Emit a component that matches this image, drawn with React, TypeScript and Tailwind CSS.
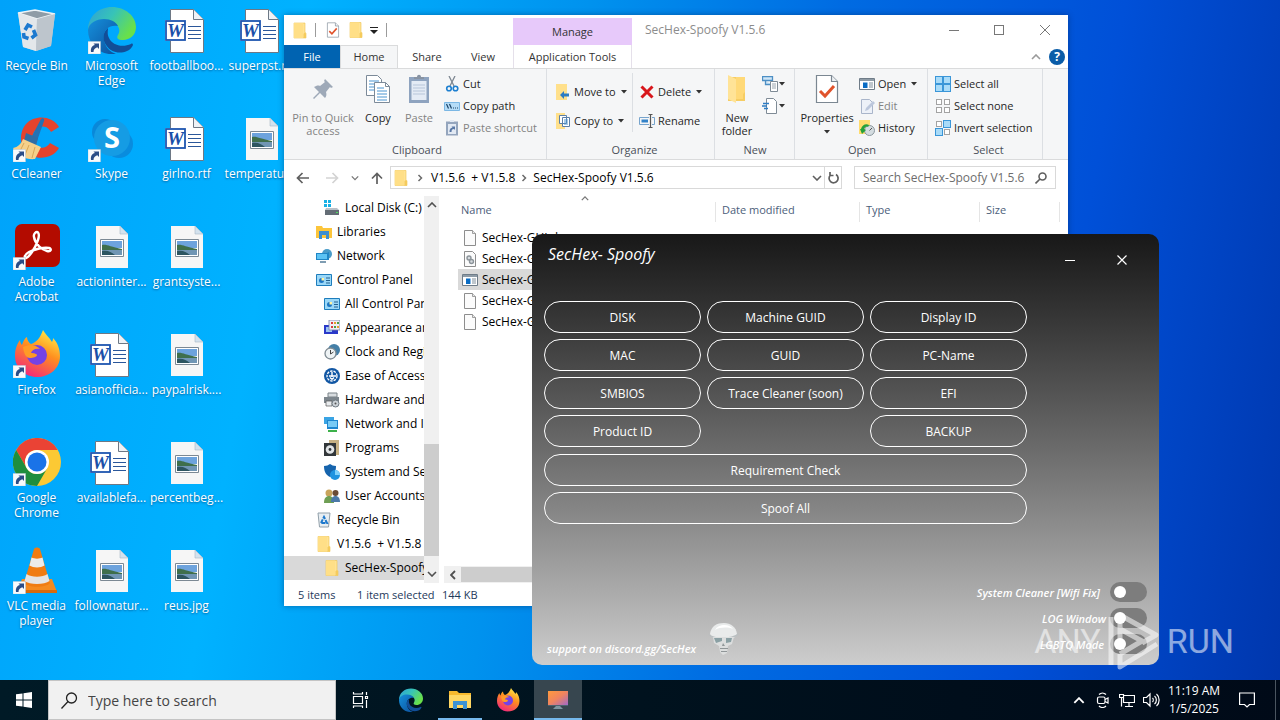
import React from "react";
import { clsx } from "clsx";

type IconProps = { className?: string };

/* ---------- Shared file icons ---------- */

const Folder = ({ className = "h-4 w-4" }: IconProps) => (
  <svg viewBox="0 0 16 16" className={className} aria-hidden="true">
    <path d="M2 .5h11v9l1 1.5v4.500H2z" fill="#ffe394" stroke="#efc24f" strokeWidth=".6" />
    <path d="M2 .5h9v15H2z" fill="#ffdf87" />
    <path d="M11.500 15.500v-4l1-1.500 1.500 1v4.500z" fill="#f5cb5c" />
  </svg>
);

const BlankPage = ({ className = "h-4 w-4" }: IconProps) => (
  <svg viewBox="0 0 16 16" className={className} aria-hidden="true">
    <path d="M2.500.5h8l3 3v12h-11z" fill="#fbfbfb" stroke="#8d8d8d" />
    <path d="M10.500.5v3h3" fill="#e8e8e8" stroke="#8d8d8d" strokeWidth=".8" />
  </svg>
);

const ConfigPage = ({ className = "h-4 w-4" }: IconProps) => (
  <svg viewBox="0 0 16 16" className={className} aria-hidden="true">
    <path d="M2.500.5h8l3 3v12h-11z" fill="#fbfbfb" stroke="#8d8d8d" />
    <circle cx="7" cy="7" r="2" fill="#d5dade" stroke="#8b9399" strokeWidth="1.400" />
    <circle cx="9.500" cy="10.500" r="2" fill="#d5dade" stroke="#8b9399" strokeWidth="1.400" />
  </svg>
);

const ProgramIcon = ({ className = "h-4 w-4" }: IconProps) => (
  <svg viewBox="0 0 16 16" className={className} aria-hidden="true">
    <path d="M.5 2.500h15v11H.5z" fill="#fff" stroke="#6f7c88" />
    <path d="M1 3h14v2H1z" fill="#8e9ba6" />
    <path d="M4 6.500h4.500v5.500H4z" fill="#0a6cc4" />
    <path d="M10 7h4M10 9h4M10 11h4" stroke="#7e8d9a" />
  </svg>
);

const CheckedPage = ({ className = "h-4 w-4" }: IconProps) => (
  <svg viewBox="0 0 24 30" className={className} aria-hidden="true">
    <path d="M1.500 1.500h15l6 6v21h-21z" fill="#fff" stroke="#7b8792" strokeWidth="1.200" />
    <path d="M16.500 1.500v6h6" fill="#eef1f4" stroke="#7b8792" strokeWidth="1.200" />
    <path d="m5 17 5 5 9-10" fill="none" stroke="#e0532c" strokeWidth="3" />
  </svg>
);

const Chevron = ({ className = "h-2 w-3", d = "m1 1 4 4 4-4" }: IconProps & { d?: string }) => (
  <svg viewBox="0 0 10 6" className={className} fill="none" stroke="currentColor" strokeWidth="1.600" aria-hidden="true">
    <path d={d} />
  </svg>
);

const ChevronRight = ({ className = "h-2 w-1.5" }: IconProps) => (
  <svg viewBox="0 0 6 8" className={className} fill="none" stroke="#6b6b6b" strokeWidth="1.500" aria-hidden="true">
    <path d="m1.500 1 3 3-3 3" />
  </svg>
);

const Caret = () => (
  <svg viewBox="0 0 6 4" className="h-1 w-1.5 shrink-0" aria-hidden="true">
    <path d="M0 0h6L3 3.500z" fill="#333" />
  </svg>
);

/* ---------- Desktop icons ---------- */

const Shortcut = () => (
  <g>
    <path d="M0 35.500h12.500V48H0z" fill="#f8fafc" stroke="#b9c9d6" strokeWidth=".5" />
    <path d="M3 46c-.5-4 1-6.500 4-7l-1.500-1.500H11V43l-1.700-1.700C7 42 5.500 43.500 5.500 46z" fill="#2b4d87" />
  </g>
);

const RecycleBin = () => (
  <>
    <path d="m5 7 17-3 20 4-4 32-15 5-13-4z" fill="#c9d0d6" opacity=".95" />
    <path d="m5 7 17-3 20 4-18 5z" fill="#8f9ca6" stroke="#eef3f6" strokeWidth="1.500" />
    <path d="m5 7 19 6-1 32-13-4z" fill="#e3e7ea" />
    <path d="m24 13 18-5-4 32-15 5z" fill="#bdc5cc" />
    <g fill="none" stroke="#1c79cf" strokeWidth="3.600">
      <path d="m12 24 3-5 4 2" />
      <path d="m20.500 24 2 5-4 3" />
      <path d="M15.500 32.500 11 31l-.5-4" />
    </g>
  </>
);

const EdgeShape = ({ id }: { id: string }) => (
  <>
    <defs>
      <linearGradient id={`${id}-top`} x1="0" y1="0" x2="1" y2=".5">
        <stop offset="0" stopColor="#2f9fd8" />
        <stop offset=".5" stopColor="#37c3b8" />
        <stop offset="1" stopColor="#69e04a" />
      </linearGradient>
      <linearGradient id={`${id}-left`} x1="0" y1="0" x2="1" y2="1">
        <stop offset="0" stopColor="#1590dc" />
        <stop offset="1" stopColor="#0c4f9c" />
      </linearGradient>
    </defs>
    <path d="M0 24C0 10 11 1 24 1s24 9 24 20c0 8-6 13-13 13-5 0-7-2-5-5 4-6-1-13-10-14C10 14 2 19 0 24z" fill={`url(#${id}-top)`} />
    <path d="M0 24c1-7 8-11 16-11 7 0 12 3 14 7-9-2-16 5-14 14 1 7 6 12 12 14C12 50 0 39 0 24z" fill={`url(#${id}-left)`} />
    <path d="M20 22c-5 4-6 11-2 17 5 8 14 9 21 6 3-1 5-4 6-6 0-1-1-2-2-1-9 4-19 1-22-6-2-4-1-7-1-10z" fill="#124e98" />
  </>
);

const CCleaner = () => (
  <>
    <path d="M46 13C40 2 22 0 13 10c-9 11-5 27 6 32 10 4 22 1 27-8l-9-5c-4 7-14 6-17-1-3-9 5-18 13-15 2 1 4 3 5 5z" fill="#e5432d" />
    <path d="M28 5c2-2 4 0 3 2L24 27l-6-3z" fill="#2472b4" />
    <path d="m13 19 12 5-2 8-12-5z" fill="#2f6ea6" />
    <path d="m10 25 18 8-6 12c-8 1-18-3-22-11 5-1 8-4 10-9z" fill="#f5d08a" />
    <path d="m11 29-4 8M16 31l-4 10M22 33l-3 11" stroke="#d8a655" strokeWidth="1" />
  </>
);

const Skype = () => (
  <>
    <circle cx="17" cy="18" r="13" fill="#0b7fcf" opacity=".8" />
    <circle cx="31" cy="30" r="14" fill="#0b84d6" opacity=".8" />
    <circle cx="24" cy="24" r="18" fill="#159ce4" />
    <text x="24" y="34" textAnchor="middle" fontFamily="Open Sans" fontWeight="700" fontSize="29" fill="#fff">
      S
    </text>
  </>
);

const Acrobat = () => (
  <>
    <rect x="2" y="2" width="45" height="43" rx="7" fill="#b30b00" />
    <path
      d="M22 11c3-3 5 1 3 7-3 9-9 17-12 18-2 0-2-3 3-6 6-3 15-5 20-4 3 1 2 4-2 3-5-1-12-7-13-14-.5-2 0-3 1-4z"
      fill="none"
      stroke="#fff"
      strokeWidth="2.400"
    />
  </>
);

const FirefoxShape = ({ id }: { id: string }) => (
  <>
    <defs>
      <linearGradient id={`${id}-fire`} x1=".8" y1="0" x2=".3" y2="1">
        <stop offset="0" stopColor="#fff04a" />
        <stop offset=".45" stopColor="#ff8f1f" />
        <stop offset="1" stopColor="#f2267c" />
      </linearGradient>
    </defs>
    <path
      d="M30 0c2 4 6 7 9 12 1-2 1-3 1-4 5 5 7 12 7 18 0 13-11 21-23 21S2 38 2 26c0-7 2-12 5-16 0 2 1 4 2 5 1-4 3-7 5-8 0 3 2 6 4 7 6-2 9-6 12-14z"
      fill={`url(#${id}-fire)`}
    />
    <circle cx="24" cy="25" r="10" fill="#7542e5" />
    <path d="M10 17c6-3 14-2 17 2-5-1-8 1-9 4 3 0 6 1 6 2 0 2-4 3-7 3-4 0-6-4-7-11z" fill="#ff9a26" />
  </>
);

const Chrome = () => (
  <>
    <circle cx="24" cy="24" r="24" fill="#fcc934" />
    <path d="M3.200 12A24 24 0 0 1 44.800 12H24a12 12 0 0 0-10.400 18z" fill="#ea4335" />
    <path d="M3.200 12A24 24 0 0 0 24 48l10.400-18a12 12 0 0 1-20.800 0z" fill="#1e8e3e" />
    <circle cx="24" cy="24" r="12" fill="#fff" />
    <circle cx="24" cy="24" r="9.500" fill="#1a73e8" />
  </>
);

const Vlc = () => (
  <>
    <path d="m9 33-5 13h40l-5-13z" fill="#f58a1f" />
    <path d="M4 44h40v3H4z" fill="#d66a0c" />
    <path d="M21 3c1-2 5-2 6 0l10 34c-4 5-22 5-26 0z" fill="#f07c12" />
    <path d="m18.500 11.500-2 8c4 2.500 11 2.500 15 0l-2-8c-3 1.500-8 1.500-11 0z" fill="#ecebe9" />
    <path d="m13.500 28-2 7c5 4 20 4 25 0l-2-7c-5 3.500-16 3.500-21 0z" fill="#e6e4e2" />
  </>
);

const WordDoc = () => (
  <>
    <path d="M7.500 3.500h23l10 10v33h-33z" fill="#fff" stroke="#6d7885" />
    <path d="M30.500 3.500v10h10" fill="#eef2f6" stroke="#6d7885" />
    <path d="M25 20.500h13M25 24.500h13M25 28.500h13M25 32.500h13" stroke="#2b579a" strokeWidth="1.200" />
    <rect x="2" y="14" width="21" height="21" fill="#fff" />
    <rect x="3" y="15" width="19" height="19" fill="#fff" stroke="#1f56b0" strokeWidth="1.800" />
    <text x="12.500" y="31" textAnchor="middle" fontFamily="Liberation Serif" fontStyle="italic" fontWeight="700" fontSize="19" fill="#1a4fa8">
      W
    </text>
  </>
);

const ImageDoc = () => (
  <>
    <path d="M8 4h24l8 8v34H8z" fill="#f6f6f6" />
    <path d="M32 4v8h8z" fill="#d3e2ee" stroke="#a9b9c6" strokeWidth=".6" />
    <path d="M12.500 17.500h23v17h-23z" fill="#fff" stroke="#7c8994" />
    <path d="M14 19h20v7H14z" fill="#6da3dd" />
    <path d="M14 23c5-1 8 2 20 4v2H14z" fill="#3f6f4c" />
    <path d="M14 28h20v5H14z" fill="#7196b4" />
    <path d="M14 29c6-1 9 1 13 4H14z" fill="#2d5560" />
  </>
);

const DESKTOP_ITEMS = [
  { label: "Recycle Bin", art: <RecycleBin /> },
  { label: "CCleaner", art: <CCleaner />, shortcut: true },
  { label: "Adobe Acrobat", art: <Acrobat />, shortcut: true },
  { label: "Firefox", art: <FirefoxShape id="desk-firefox" />, shortcut: true },
  { label: "Google Chrome", art: <Chrome />, shortcut: true },
  { label: "VLC media player", art: <Vlc />, shortcut: true },
  { label: "Microsoft Edge", art: <EdgeShape id="desk-edge" />, shortcut: true },
  { label: "Skype", art: <Skype />, shortcut: true },
  { label: "actioninter...", art: <ImageDoc /> },
  { label: "asianofficia...", art: <WordDoc /> },
  { label: "availablefa...", art: <WordDoc /> },
  { label: "follownatur...", art: <ImageDoc /> },
  { label: "footballboo...", art: <WordDoc /> },
  { label: "girlno.rtf", art: <WordDoc /> },
  { label: "grantsyste...", art: <ImageDoc /> },
  { label: "paypalrisk....", art: <ImageDoc /> },
  { label: "percentbeg...", art: <ImageDoc /> },
  { label: "reus.jpg", art: <ImageDoc /> },
  { label: "superpst.rtf", art: <WordDoc /> },
  { label: "temperatur...", art: <ImageDoc /> },
];

const DesktopIcons = () => (
  <div className="grid w-fit grid-flow-col auto-cols-[75px] grid-rows-[repeat(6,108px)]">
    {DESKTOP_ITEMS.map((item) => (
      <button key={item.label} className="flex flex-col items-center gap-1 pt-1.5 pr-0.5 text-[12px] leading-[15px] text-white">
        <svg viewBox="0 0 48 48" className="h-12 w-12 shrink-0" aria-hidden="true">
          {item.art}
          {item.shortcut && <Shortcut />}
        </svg>
        <span className="[text-shadow:0_1px_2px_rgba(0,50,100,0.6)]">{item.label}</span>
      </button>
    ))}
  </div>
);

/* ---------- Explorer ribbon ---------- */

const BigButton = ({ icon, label, muted, className, caret }: { icon: React.ReactNode; label: string; muted?: boolean; className: string; caret?: boolean }) => (
  <button className={clsx("flex flex-col items-center gap-1.5 leading-[13px]", className, muted ? "text-[#838383]" : "text-[#262626]")}>
    <span className="flex h-8 items-center justify-center">{icon}</span>
    <span>{label}</span>
    {caret && <Caret />}
  </button>
);

const SmallButton = ({ icon, label, muted, caret }: { icon: React.ReactNode; label: string; muted?: boolean; caret?: boolean }) => (
  <button className={clsx("flex h-[22px] items-center gap-[3px] whitespace-nowrap", muted ? "text-[#838383]" : "text-[#262626]")}>
    {icon}
    <span className={clsx(caret && "pr-0.5")}>{label}</span>
    {caret && <Caret />}
  </button>
);

const RibbonGroup = ({ title, className, children }: { title: string; className: string; children: React.ReactNode }) => (
  <section className={clsx("flex shrink-0 flex-col justify-between border-r border-[#dcdfe3]", className)}>
    <div className="flex pt-1">{children}</div>
    <h2 className="text-center leading-[18px] text-[#4a4f57]">{title}</h2>
  </section>
);

const PinIcon = () => (
  <svg viewBox="0 0 24 24" className="h-6 w-6" fill="#9ea9b8" aria-hidden="true">
    <path d="m14 2 8 8-2 1-1-1-4 5c1 3 0 5-1 6l-5-5-6 6-1-1 6-6-5-5c2-1 4-2 6-1l5-4-1-1z" />
  </svg>
);

const CopyIcon = () => (
  <svg viewBox="0 0 26 30" className="h-[30px] w-[26px]" aria-hidden="true">
    <path d="M1.500 1.500h11l4 4v16h-15z" fill="#fff" stroke="#7c8a99" />
    <path d="M4 7h10M4 10h10M4 13h10M4 16h10" stroke="#4b95d1" />
    <path d="M9.500 8.500h11l4 4v16h-15z" fill="#fff" stroke="#7c8a99" />
    <path d="M20.500 8.500v4h4" fill="none" stroke="#7c8a99" />
    <path d="M12 14h7M12 17h10M12 20h10M12 23h10M12 26h10" stroke="#4b95d1" />
  </svg>
);

const PasteIcon = () => (
  <svg viewBox="0 0 24 30" className="h-[30px] w-6" aria-hidden="true">
    <path d="M2 3h20v26H2z" fill="#8ea3bf" />
    <path d="M4.500 7h15v19h-15z" fill="#e4ebf5" />
    <path d="M7 5V3h3c0-3 4-3 4 0h3v2z" fill="#8793a3" />
    <path d="M6 11h12M6 14h12M6 17h12M6 20h12" stroke="#b7c5d9" />
  </svg>
);

const ScissorsIcon = () => (
  <svg viewBox="0 0 16 16" className="h-4 w-4" fill="none" aria-hidden="true">
    <path d="m5 0 5 10M11 0 6 10" stroke="#7d8791" strokeWidth="1.300" />
    <circle cx="5" cy="12.500" r="2.300" stroke="#1d7fd0" strokeWidth="1.600" />
    <circle cx="11.500" cy="12.500" r="2.300" stroke="#1d7fd0" strokeWidth="1.600" />
  </svg>
);

const CopyPathIcon = () => (
  <svg viewBox="0 0 16 16" className="h-4 w-4" aria-hidden="true">
    <path d="M.5 4.500h15v8H.5z" fill="#b5dcf7" stroke="#7bb7e4" />
    <path d="m2.500 6 2 4.500M5.500 6l2 4.500M9 10h1M11 10h1M13 10h1" stroke="#1c4468" strokeWidth="1.200" />
  </svg>
);

const PasteShortcutIcon = () => (
  <svg viewBox="0 0 16 16" className="h-4 w-4" aria-hidden="true">
    <path d="M2 1.500h12v14H2z" fill="#94a5bd" />
    <path d="M4 4h8v10H4zM6 0h4v2H6z" fill="#e2e9f3" />
    <path d="M5.500 12c0-3 1-4 3-4.500L7.500 6.500H11V10L10 9c-2 0-2.500 1-2.500 3z" fill="#5978a6" />
  </svg>
);

const MoveToIcon = () => (
  <svg viewBox="0 0 16 16" className="h-4 w-4" aria-hidden="true">
    <path d="M1 0h11v16H1z" fill="#ffe08b" />
    <path d="m5 11 4-4v2.500h5v3H9V15z" fill="#2d7cc4" />
  </svg>
);

const CopyToIcon = () => (
  <svg viewBox="0 0 16 16" className="h-4 w-4" aria-hidden="true">
    <path d="M1 0h9v16H1z" fill="#ffe08b" />
    <path d="M4.500 2.500h7v8h-7zM7.500 4.500h7v9h-7z" fill="#fff" stroke="#5a7fa8" />
    <path d="M9 7h4M9 9h4M9 11h4" stroke="#4b95d1" />
  </svg>
);

const DeleteIcon = () => (
  <svg viewBox="0 0 16 16" className="h-4 w-4" fill="none" stroke="#d8161b" strokeWidth="3" aria-hidden="true">
    <path d="m2.500 2.500 11 11M13.500 2.500l-11 11" />
  </svg>
);

const RenameIcon = () => (
  <svg viewBox="0 0 16 16" className="h-4 w-4" fill="none" aria-hidden="true">
    <path d="M10 4.500H.5v7H10M13 4.500h2.500v7H13" stroke="#77a4cd" />
    <path d="M2.500 6.500H9v3H2.500z" fill="#3382c8" />
    <path d="M9.500 1.500h4M9.500 14.500h4M11.500 1.500v13" stroke="#555" strokeWidth="1.200" />
  </svg>
);

const NewFolderIcon = () => (
  <svg viewBox="0 0 20 28" className="h-7 w-5" aria-hidden="true">
    <path d="M1 2h17v24H1z" fill="#f6cd63" />
    <path d="M1 0 9 4v24l-8-4z" fill="#ffe397" />
    <path d="M9 2h9v15l-2 2v5H9z" fill="#ffd978" />
  </svg>
);

const NewItemIcon = () => (
  <svg viewBox="0 0 16 16" className="h-4 w-4" fill="none" aria-hidden="true">
    <path d="M.5.500h10v4H.5zM3.500 4.500v4h6" stroke="#4d8fc4" strokeWidth="1.300" fill="#cfe6f7" />
    <path d="M8.500 5.500h7v10h-7z" fill="#fff" stroke="#7f8b96" />
    <path d="M10 8h4M10 10h4M10 12h4" stroke="#9aa5af" />
  </svg>
);

const EasyAccessIcon = () => (
  <svg viewBox="0 0 16 16" className="h-4 w-4" fill="none" aria-hidden="true">
    <path d="M4.500.500h7l3 3v12h-10z" fill="#fff" stroke="#7f8b96" />
    <path d="M1 5.500h6M0 8h5M2 10.500h4" stroke="#2d7cc4" strokeWidth="1.300" />
  </svg>
);

const EditIcon = () => (
  <svg viewBox="0 0 16 16" className="h-4 w-4" aria-hidden="true">
    <path d="M2.500 1.500h8l3 3v11h-11z" fill="#edf1f8" stroke="#a9b5ca" />
    <path d="m6 13 1-3 7-7 2 2-7 7z" fill="#bcc7dc" />
  </svg>
);

const HistoryIcon = () => (
  <svg viewBox="0 0 16 16" className="h-4 w-4" aria-hidden="true">
    <path d="M0 0h11v14H0z" fill="#ffdc6e" />
    <circle cx="10.500" cy="10.500" r="5" fill="#d4dce0" stroke="#8b979e" />
    <path d="M10.500 10.500 13 8" stroke="#555" />
    <path d="M2 9c1-4 5-6 8-4l-1 2c-2-1-3 0-4 2l2 1-4 4-2-5z" fill="#25a13a" />
  </svg>
);

const SelectIcon = ({ filled }: { filled: number[] }) => (
  <svg viewBox="0 0 16 16" className="h-4 w-4" aria-hidden="true">
    {[0, 1, 2, 3].map((i) => (
      <rect
        key={i}
        x={(i % 2) * 8 + (filled.includes(i) ? 0.5 : 1.5)}
        y={Math.floor(i / 2) * 8 + (filled.includes(i) ? 0.5 : 1.5)}
        width={filled.includes(i) ? 7 : 5}
        height={filled.includes(i) ? 7 : 5}
        fill={filled.includes(i) ? "#a9dbf8" : "#fff"}
        stroke={filled.includes(i) ? "#3a96d8" : "#a3a3a3"}
      />
    ))}
  </svg>
);

const Ribbon = () => (
  <div className="flex h-[92px] shrink-0 border-y border-[#dadbdc] bg-[#f5f6f7] text-[11px]">
    <RibbonGroup title="Clipboard" className="w-[263px] pl-1">
      <BigButton icon={<PinIcon />} label="Pin to Quick access" muted className="w-[70px]" />
      <BigButton icon={<CopyIcon />} label="Copy" className="w-10" />
      <BigButton icon={<PasteIcon />} label="Paste" muted className="w-[42px]" />
      <div className="flex flex-col pl-1">
        <SmallButton icon={<ScissorsIcon />} label="Cut" />
        <SmallButton icon={<CopyPathIcon />} label="Copy path" />
        <SmallButton icon={<PasteShortcutIcon />} label="Paste shortcut" muted />
      </div>
    </RibbonGroup>
    <RibbonGroup title="Organize" className="w-[168px] pl-2">
      <div className="flex w-[78px] flex-col gap-[7px] border-r border-[#dcdfe3] pt-2">
        <SmallButton icon={<MoveToIcon />} label="Move to" caret />
        <SmallButton icon={<CopyToIcon />} label="Copy to" caret />
      </div>
      <div className="flex flex-col gap-[7px] pt-2 pl-1.5">
        <SmallButton icon={<DeleteIcon />} label="Delete" caret />
        <SmallButton icon={<RenameIcon />} label="Rename" />
      </div>
    </RibbonGroup>
    <RibbonGroup title="New" className="w-20 pl-px">
      <BigButton icon={<NewFolderIcon />} label="New folder" className="w-[42px]" />
      <div className="flex flex-col pl-1">
        <button className="flex h-[22px] items-center gap-px" aria-label="New item">
          <NewItemIcon />
          <Caret />
        </button>
        <button className="flex h-[22px] items-center gap-px" aria-label="Easy access">
          <EasyAccessIcon />
          <Caret />
        </button>
      </div>
    </RibbonGroup>
    <RibbonGroup title="Open" className="w-[133px] pl-0.5">
      <BigButton icon={<CheckedPage className="h-[30px] w-6" />} label="Properties" className="w-[60px]" caret />
      <div className="flex flex-col pl-0.5">
        <SmallButton icon={<ProgramIcon />} label="Open" caret />
        <SmallButton icon={<EditIcon />} label="Edit" muted />
        <SmallButton icon={<HistoryIcon />} label="History" />
      </div>
    </RibbonGroup>
    <RibbonGroup title="Select" className="w-[115px] pl-[7px]">
      <div className="flex flex-col">
        <SmallButton icon={<SelectIcon filled={[0, 1, 2, 3]} />} label="Select all" />
        <SmallButton icon={<SelectIcon filled={[]} />} label="Select none" />
        <SmallButton icon={<SelectIcon filled={[1, 2]} />} label="Invert selection" />
      </div>
    </RibbonGroup>
  </div>
);

const TitleArea = () => (
  <div className="flex h-[53px] shrink-0">
    <div className="flex w-[229px] flex-col">
      <div className="flex h-[30px] items-center pl-2">
        <Folder className="h-[17px] w-4" />
        <span className="mr-2.5 ml-[7px] h-3.5 w-px bg-[#9b9b9b]" />
        <CheckedPage className="h-4 w-[14px]" />
        <Folder className="ml-2 h-4 w-4" />
        <svg viewBox="0 0 8 7" className="ml-1.5 h-[7px] w-2" aria-hidden="true">
          <path d="M0 0h8v1H0zM0 3h8L4 7z" fill="#222" />
        </svg>
        <span className="ml-2 h-3.5 w-px bg-[#9b9b9b]" />
      </div>
      <div className="flex flex-1 text-[11px] text-[#333]">
        <button className="w-14 bg-[#0063b1] text-white">File</button>
        <button className="w-[58px] border-x border-t border-[#dadbdc] bg-[#f5f6f7]">Home</button>
        <button className="w-[58px]">Share</button>
        <button className="w-[54px]">View</button>
      </div>
    </div>
    <div className="flex w-[119px] shrink-0 flex-col pt-[3px] text-[11px] text-[#333]">
      <div className="flex h-[27px] items-center justify-center bg-[#e7c9fa]">Manage</div>
      <button className="flex-1 border-x border-[#e5e0ea] whitespace-nowrap">Application Tools</button>
    </div>
    <div className="flex flex-1 flex-col">
      <div className="flex h-[30px] items-center pl-[13px]">
        <h1 className="flex-1 text-[#8c8c8c]">SecHex-Spoofy V1.5.6</h1>
        <button className="flex w-[45px] justify-center" aria-label="Minimize">
          <span className="h-px w-2.5 bg-[#777]" />
        </button>
        <button className="flex w-[45px] justify-center" aria-label="Maximize">
          <span className="h-2.5 w-2.5 border border-[#777]" />
        </button>
        <button className="flex w-[47px] justify-center" aria-label="Close">
          <svg viewBox="0 0 10 10" className="h-2.5 w-2.5" stroke="#777" aria-hidden="true">
            <path d="m0 0 10 10M10 0 0 10" />
          </svg>
        </button>
      </div>
      <div className="flex flex-1 items-center justify-end gap-2 pr-[3px] text-[#9a9a9a]">
        <button aria-label="Collapse ribbon">
          <Chevron className="h-1.5 w-2.5" d="m1 5 4-4 4 4" />
        </button>
        <button className="flex h-4 w-4 items-center justify-center rounded-full bg-[#0a5ca8] text-[12px] leading-4 font-bold text-white" aria-label="Help">
          ?
        </button>
      </div>
    </div>
  </div>
);

const Arrow = ({ className, d }: { className: string; d: string }) => (
  <svg viewBox="0 0 14 12" className={clsx("h-3 w-3.5", className)} fill="none" stroke="currentColor" strokeWidth="1.700" aria-hidden="true">
    <path d={d} />
  </svg>
);

const AddressBar = () => (
  <div className="flex h-[35px] shrink-0 items-center pr-3 pl-3">
    <button aria-label="Back">
      <Arrow className="text-[#5f5f5f]" d="M13 6H2M6.500 1 1.500 6l5 5" />
    </button>
    <button className="ml-[15px]" aria-label="Forward">
      <Arrow className="text-[#d3d3d3]" d="M1 6h11M7.500 1l5 5-5 5" />
    </button>
    <button className="ml-3 text-[#777]" aria-label="Recent locations">
      <Chevron className="h-1.5 w-2" />
    </button>
    <button className="mr-1.5 ml-[11px]" aria-label="Up">
      <Arrow className="text-[#5f5f5f]" d="M7 12V2M2 6.500l5-5 5 5" />
    </button>
    <div className="flex h-[23px] flex-1 items-center border border-[#d9d9d9]">
      <Folder className="ml-0.5 h-4 w-4" />
      <span className="ml-2">
        <ChevronRight />
      </span>
      <button className="ml-2 whitespace-pre">V1.5.6  + V1.5.8</button>
      <span className="ml-1.5">
        <ChevronRight />
      </span>
      <button className="ml-1.5 flex-1 text-left">SecHex-Spoofy V1.5.6</button>
      <button className="mr-0.5 text-[#5f5f5f]" aria-label="Previous locations">
        <Chevron className="h-1.5 w-2.5" />
      </button>
      <button className="flex h-full w-[17px] items-center justify-center border-l border-[#d9d9d9]" aria-label="Refresh">
        <svg viewBox="0 0 12 12" className="h-3 w-3" fill="none" stroke="#5f5f5f" strokeWidth="1.700" aria-hidden="true">
          <path d="M9 2.500A4.500 4.500 0 1 1 3.500 3M3 0v3.500h3.500" />
        </svg>
      </button>
    </div>
    <label className="ml-3 flex h-[23px] w-[202px] items-center border border-[#d9d9d9] pr-2 pl-2">
      <input className="w-full min-w-0 outline-none placeholder:text-[#6d6d6d]" placeholder="Search SecHex-Spoofy V1.5.6" aria-label="Search SecHex-Spoofy V1.5.6" />
      <svg viewBox="0 0 12 12" className="h-3 w-3 shrink-0" fill="none" stroke="#5f5f5f" strokeWidth="1.600" aria-hidden="true">
        <circle cx="7.500" cy="4.500" r="3.500" />
        <path d="M5 7 .5 11.500" />
      </svg>
    </label>
  </div>
);

/* ---------- Navigation pane ---------- */

const NAV_ART = {
  disk: (
    <>
      <path d="M1 10h14v5H1z" fill="#646d75" />
      <path d="m2 8-1 2h14l-2-2z" fill="#b9c1c8" />
      <path d="M12 12h2v1h-2z" fill="#4de05d" />
      <path d="M0 0h3v3H0zM4 0h3v3H4zM0 4h3v3H0zM4 4h3v3H4z" fill="#19b0e5" />
    </>
  ),
  library: (
    <>
      <path d="M0 2h6l1 2h9v10H0z" fill="#fcc53b" />
      <path d="M3 7h10v8h-3v-4H6v4H3z" fill="#3d8ed0" />
    </>
  ),
  network: (
    <>
      <circle cx="11" cy="6" r="5" fill="#4a9cc9" />
      <path d="M0 5h11l2-1v8H0z" fill="#1f86c6" />
      <path d="M1 6h10v5H1z" fill="#5cc3f4" />
      <path d="M4 13h6v2H4z" fill="#7f9db2" />
    </>
  ),
  panel: (
    <>
      <path d="M.5 2.500h15v11H.5z" fill="#9ad8f8" stroke="#1e7dbc" />
      <circle cx="5.500" cy="8.500" r="2.500" fill="#1d76c4" />
      <path d="M5.500 8.500V6H8v2.500z" fill="#fff3a0" />
      <path d="M10 6h4M10 8.500h4M10 11h4" stroke="#24618f" />
    </>
  ),
  appearance: (
    <>
      <path d="M0 5h14v9H0z" fill="#2a39c9" />
      <path d="M2 7h6v5H2z" fill="#9bc3f4" />
      <path d="M5 0h11v10H5z" fill="#efeff5" stroke="#7880a8" strokeWidth=".8" />
      <path d="M7 2h2v2H7zM7 6h2v2H7z" fill="#d84040" />
      <path d="M10 2h2v2h-2zM13 6h2v2h-2z" fill="#e59f2a" />
      <path d="M13 2h2v2h-2zM10 6h2v2h-2z" fill="#4a9e47" />
    </>
  ),
  clock: (
    <>
      <circle cx="10" cy="6" r="6" fill="#447fa7" />
      <circle cx="6.500" cy="9.500" r="5.500" fill="#eef3f5" stroke="#7f8b93" strokeWidth="1.300" />
      <path d="M6.500 6v4l3-2" fill="none" stroke="#444" />
    </>
  ),
  ease: (
    <>
      <circle cx="8" cy="8" r="8" fill="#1257a4" />
      <circle cx="8" cy="8" r="5" fill="none" stroke="#fff" strokeWidth="1.300" strokeDasharray="2.500 1" />
      <path d="M8 4v5M5 8h7M8 11.500 6 9.500M8 11.500l2-2" stroke="#fff" strokeWidth="1.400" />
    </>
  ),
  hardware: (
    <>
      <path d="M4 1h9v4H4z" fill="#d9dde0" stroke="#7b8388" />
      <path d="M0 5h15v6H0z" fill="#7d868d" />
      <path d="M2 9h6v5H2z" fill="#e9ecee" stroke="#555" strokeWidth=".7" />
      <circle cx="11.500" cy="11.500" r="3.500" fill="#cdd3d8" stroke="#707a82" />
      <circle cx="11.500" cy="11.500" r="1" fill="#555" />
    </>
  ),
  internet: (
    <>
      <path d="M0 1h10v7H0z" fill="#3aa4e4" />
      <path d="M3 4h11v9H3z" fill="#1e86cf" />
      <path d="M4 5h9v6H4z" fill="#79cbf5" />
      <path d="M4 14h9v2H4z" fill="#3cb14a" />
    </>
  ),
  programs: (
    <>
      <path d="M5 0h10v15H5z" fill="#c7b184" />
      <path d="M0 3h12v13H0z" fill="#32373a" />
      <circle cx="6" cy="9.500" r="4.300" fill="#e2e5e7" />
      <circle cx="6" cy="9.500" r="1.400" fill="#32373a" />
    </>
  ),
  security: (
    <>
      <path d="M0 2c3 0 4-1 6-2 2 1 3 2 6 2 0 6-2 9-6 11C2 11 0 8 0 2z" fill="#1664ad" />
      <circle cx="11" cy="11" r="5" fill="#1f93e0" />
      <path d="M11 11V6a5 5 0 0 1 5 5z" fill="#7fd0fa" />
    </>
  ),
  users: (
    <>
      <circle cx="5" cy="5" r="3.500" fill="#c8a45c" />
      <path d="M0 15c0-5 2-7 5-7s5 2 5 7z" fill="#6f9f54" />
      <circle cx="11.500" cy="5" r="3" fill="#6a4b35" />
      <path d="M7 14c0-4 2-6 4.500-6S16 10 16 14z" fill="#4a79a8" />
    </>
  ),
  bin: (
    <>
      <path d="m2 1 1.500 14h9L14 1z" fill="#e8eef2" stroke="#92a0aa" />
      <path d="m5 11 3-6 3 6z" fill="none" stroke="#1d78cc" strokeWidth="2" strokeDasharray="4 1" />
    </>
  ),
};

const NAV_ITEMS: { label: string; art?: keyof typeof NAV_ART; deep?: boolean; selected?: boolean }[] = [
  { label: "Local Disk (C:)", art: "disk", deep: true },
  { label: "Libraries", art: "library" },
  { label: "Network", art: "network" },
  { label: "Control Panel", art: "panel" },
  { label: "All Control Panel Items", art: "panel", deep: true },
  { label: "Appearance and Personalization", art: "appearance", deep: true },
  { label: "Clock and Region", art: "clock", deep: true },
  { label: "Ease of Access", art: "ease", deep: true },
  { label: "Hardware and Sound", art: "hardware", deep: true },
  { label: "Network and Internet", art: "internet", deep: true },
  { label: "Programs", art: "programs", deep: true },
  { label: "System and Security", art: "security", deep: true },
  { label: "User Accounts", art: "users", deep: true },
  { label: "Recycle Bin", art: "bin" },
  { label: "V1.5.6  + V1.5.8" },
  { label: "SecHex-Spoofy V1.5.6", deep: true, selected: true },
];

const NavPane = () => (
  <nav className="flex w-[155px] shrink-0">
    <ul className="w-[140px] overflow-hidden">
      {NAV_ITEMS.map((item) => (
        <li key={item.label}>
          <button
            className={clsx(
              "flex h-6 w-full items-center gap-[5px] overflow-hidden whitespace-pre",
              item.deep ? "pl-10" : "pl-8",
              item.selected && "bg-[#d9d9d9]"
            )}
          >
            {item.art ? (
              <svg viewBox="0 0 16 16" className="h-4 w-4 shrink-0" aria-hidden="true">
                {NAV_ART[item.art]}
              </svg>
            ) : (
              <Folder className="h-4 w-4 shrink-0" />
            )}
            {item.label}
          </button>
        </li>
      ))}
    </ul>
    <div className="flex w-[15px] flex-col items-center bg-[#f0f0f0] text-[#505050]">
      <button className="flex h-[18px] items-center" aria-label="Scroll up">
        <Chevron className="h-1.5 w-2.5" d="m1 5 4-4 4 4" />
      </button>
      <div className="mt-auto h-28 w-full bg-[#cdcdcd]" />
      <button className="flex h-[27px] items-end pb-1.5" aria-label="Scroll down">
        <Chevron className="h-1.5 w-2.5" />
      </button>
    </div>
  </nav>
);

/* ---------- File list ---------- */

const FILES = [
  { name: "SecHex-GUI.deps", date: "9/16/2024 2:26 PM", type: "JSON File", size: "58 KB", icon: <BlankPage className="h-4 w-4 shrink-0" /> },
  { name: "SecHex-GUI.dll", icon: <ConfigPage className="h-4 w-4 shrink-0" /> },
  { name: "SecHex-GUI", icon: <ProgramIcon className="h-4 w-4 shrink-0" />, selected: true },
  { name: "SecHex-GUI.pdb", icon: <BlankPage className="h-4 w-4 shrink-0" /> },
  { name: "SecHex-GUI", icon: <BlankPage className="h-4 w-4 shrink-0" /> },
];

const COLUMNS = [
  { label: "Name", width: "w-[258px]", pad: "pl-[3px]" },
  { label: "Date modified", width: "w-[144px]", pad: "pl-1.5" },
  { label: "Type", width: "w-[120px]", pad: "pl-1.5" },
  { label: "Size", width: "w-20", pad: "pl-1.5" },
];

const FileList = () => (
  <div className="ml-[5px] flex min-w-0 flex-1 flex-col">
    <div className="flex h-1.5 pl-[137px] text-[#777]">
      <Chevron className="h-[5px] w-2" d="m1 5 4-4 4 4" />
    </div>
    <table className="ml-3.5 w-[602px] table-fixed border-collapse">
      <thead>
        <tr>
          {COLUMNS.map((col) => (
            <th key={col.label} className={clsx("p-0 pb-[5px] text-left text-[11px] font-normal text-[#4c607a]", col.width)}>
              <div className={clsx("h-5 border-r border-[#e5e5e5] leading-4", col.pad)}>{col.label}</div>
            </th>
          ))}
        </tr>
      </thead>
      <tbody>
        {FILES.map((file, index) => (
          <tr key={index} className={clsx("h-[21px]", file.selected && "bg-[#d9d9d9]")}>
            <td className="p-0 pl-1">
              <span className="flex items-center gap-1">
                {file.icon}
                {file.name}
              </span>
            </td>
            <td className="p-0 pl-1.5 text-[11px] whitespace-nowrap text-[#6d6d6d]">{file.date}</td>
            <td className="p-0 pl-1.5 text-[11px] whitespace-nowrap text-[#6d6d6d]">{file.type}</td>
            <td className="p-0 pr-2 text-right text-[11px] text-[#6d6d6d]">{file.size}</td>
          </tr>
        ))}
      </tbody>
    </table>
    <div className="mt-auto flex h-[17px] items-center bg-[#f0f0f0]">
      <button className="flex w-[17px] justify-center text-[#505050]" aria-label="Scroll left">
        <svg viewBox="0 0 6 10" className="h-2.5 w-1.5" fill="none" stroke="currentColor" strokeWidth="1.800" aria-hidden="true">
          <path d="M5 1 1 5l4 4" />
        </svg>
      </button>
      <div className="h-[15px] w-[520px] bg-[#cdcdcd]" />
    </div>
  </div>
);

const ExplorerWindow = () => (
  <section className="absolute top-[15px] left-[284px] flex h-[591px] w-[784px] flex-col bg-white text-[12px] leading-4 text-black shadow-[0_0_6px_rgba(0,30,80,0.45)]">
    <TitleArea />
    <Ribbon />
    <AddressBar />
    <div className="flex min-h-0 flex-1 pt-px">
      <NavPane />
      <FileList />
    </div>
    <footer className="flex h-[23px] shrink-0 items-center pl-3.5 text-[11px] text-[#1e395b]">
      <span className="w-[59px]">5 items</span>
      <span className="w-[85px] whitespace-nowrap">1 item selected</span>
      <span>144 KB</span>
    </footer>
  </section>
);

/* ---------- Spoofy window ---------- */

const ACTIONS = [
  { label: "DISK" },
  { label: "Machine GUID" },
  { label: "Display ID" },
  { label: "MAC" },
  { label: "GUID" },
  { label: "PC-Name" },
  { label: "SMBIOS" },
  { label: "Trace Cleaner (soon)" },
  { label: "EFI" },
  { label: "Product ID" },
  { label: "BACKUP", span: "col-start-3" },
  { label: "Requirement Check", span: "col-span-3 mt-px" },
  { label: "Spoof All", span: "col-span-3" },
];

const SWITCHES = [
  { id: "cleaner", label: "System Cleaner [Wifi Fix]", gap: "gap-2.5" },
  { id: "log", label: "LOG Window", gap: "gap-1" },
  { id: "mode", label: "LGBTQ Mode", gap: "gap-1.5" },
];

const Skull = () => (
  <svg viewBox="0 0 32 36" className="h-9 w-8" aria-hidden="true">
    <path d="M2 13C3 5 9 2 16 2s12 4 13 11l-3 4H5z" fill="#e9ebeb" />
    <path d="M7 9c3-6 14-7 18-1-5-2-13-2-18 1z" fill="#fff" />
    <path d="M0 13c8 5 23 5 31-1l-2 3c-7 4-20 4-26 1z" fill="#b9bfc1" />
    <path d="M5 16h21l-2 7-4 2-1 7-4 2-3-3-1-6-5-3z" fill="#dcdede" />
    <path d="M6 17h8v3l-6 2zM18 17h6l-1 4-5 1z" fill="#8aa0a4" />
    <path d="m15 22 2 3h-3zM12 27h8v1h-8zM13 30h6v1h-6z" fill="#909698" />
  </svg>
);

const SpoofyWindow = () => (
  <section className="absolute top-[234px] left-[532px] flex h-[431px] w-[627px] flex-col rounded-[10px] bg-linear-to-b from-[#181818] to-[#cdcdcd] px-3 text-white">
    <header className="flex h-[67px] shrink-0 items-start pt-2.5 pl-1">
      <h2 className="flex-1 text-[16px] leading-5 font-medium italic">SecHex- Spoofy</h2>
      <div className="flex items-center pt-1.5">
        <button className="flex h-5 w-[54px] items-center justify-center" aria-label="Minimize window">
          <span className="h-px w-2.5 bg-white" />
        </button>
        <button className="flex h-5 w-[50px] items-center justify-center" aria-label="Close window">
          <svg viewBox="0 0 10 10" className="h-2.5 w-2.5" stroke="#fff" strokeWidth="1.200" aria-hidden="true">
            <path d="m.5.500 9 9M9.500.500l-9 9" />
          </svg>
        </button>
      </div>
    </header>
    <div className="grid grid-cols-[repeat(3,157px)] gap-1.5">
      {ACTIONS.map((action) => (
        <button key={action.label} className={clsx("h-8 rounded-2xl border border-white pt-0.5 text-[12px]", action.span)}>
          {action.label}
        </button>
      ))}
    </div>
    <footer className="mt-auto flex items-end pb-2 pl-[3px] text-[11px] leading-4 font-semibold italic">
      <a href="#support" className="w-[161px]">
        support on discord.gg/SecHex
      </a>
      <Skull />
      <div className="ml-auto flex flex-col items-end gap-1.5 pb-[3px]">
        {SWITCHES.map((item) => (
          <div key={item.id} className={clsx("flex items-center", item.gap)}>
            <label htmlFor={item.id} className="pt-0.5">
              {item.label}
            </label>
            <input
              id={item.id}
              type="checkbox"
              className="h-5 w-[37px] appearance-none rounded-full bg-[#7d7d7d] pt-1 pl-1 before:block before:h-3 before:w-3 before:rounded-full before:bg-white"
            />
          </div>
        ))}
      </div>
    </footer>
  </section>
);

/* ---------- Watermark ---------- */

const Watermark = () => (
  <div className="pointer-events-none absolute right-[46px] bottom-[48px] flex items-center gap-1.5 font-['Roboto',sans-serif] text-[34px] leading-none text-white opacity-55">
    <span>ANY</span>
    <svg viewBox="0 0 54 62" className="h-[62px] w-[54px]" fill="none" stroke="#fff" strokeWidth="5" aria-hidden="true">
      <path d="M4 7v48" />
      <path d="M13 32V5l36 20-14 8" strokeLinejoin="round" />
      <path d="m13 44 0 13 37-23M13 44l22-13-22-12" strokeLinejoin="round" />
    </svg>
    <span>RUN</span>
  </div>
);

/* ---------- Taskbar ---------- */

const TaskbarFolder = () => (
  <svg viewBox="0 0 24 24" className="h-6 w-6" aria-hidden="true">
    <path d="M1 3h8l2 2h12v15H1z" fill="#f7b92d" />
    <path d="M1 7h22v13H1z" fill="#ffd763" />
    <path d="M5 13h14v8h-4v-4H9v4H5z" fill="#3b92d4" />
  </svg>
);

const TaskbarMonitor = () => (
  <svg viewBox="0 0 24 24" className="h-6 w-6" aria-hidden="true">
    <defs>
      <linearGradient id="monitor" x1="0" y1="0" x2="1" y2="1">
        <stop offset="0" stopColor="#ff9a3d" />
        <stop offset=".5" stopColor="#f0845f" />
        <stop offset="1" stopColor="#a06ac8" />
      </linearGradient>
    </defs>
    <path d="M2 3h20v14H2z" fill="url(#monitor)" />
    <path d="M2 17h20v1H2z" fill="#4c6470" />
    <path d="M10 18h4l3 3H7z" fill="#7e95a0" />
  </svg>
);

const Taskbar = () => (
  <footer className="flex h-10 shrink-0 items-center bg-linear-to-r from-[#001a26] via-[#00121e] to-[#000a18] text-white">
    <button className="flex h-full w-12 items-center justify-center" aria-label="Start">
      <svg viewBox="0 0 16 16" className="h-4 w-4" fill="#fff" aria-hidden="true">
        <path d="M0 2.300 6.500 1.400v6.100H0zM7.500 1.200 16 0v7.500H7.500zM0 8.500h6.500v6.100L0 13.700zM7.500 8.500H16V16l-8.500-1.200z" />
      </svg>
    </button>
    <label className="flex h-full w-72 items-center gap-2.5 border border-[#c4c4c4] bg-[#f1f1f1] pl-3 text-[#333]">
      <svg viewBox="0 0 17 17" className="h-[17px] w-[17px] shrink-0" fill="none" stroke="#222" strokeWidth="1.300" aria-hidden="true">
        <circle cx="10.500" cy="6" r="5" />
        <path d="M7 9.500.5 16.500" />
      </svg>
      <input className="w-full min-w-0 text-[14px] outline-none placeholder:text-[#444]" placeholder="Type here to search" aria-label="Type here to search" />
    </label>
    <button className="flex h-full w-12 items-center justify-center" aria-label="Task View">
      <svg viewBox="0 0 18 18" className="h-[18px] w-[18px]" fill="none" stroke="#fff" strokeWidth="1.200" aria-hidden="true">
        <path d="M2.500 5.500h9v7h-9zM2.500 1v2h9V1M2.500 17v-2h9v2M15.500 1v3M15.500 9v8M14.500 5.500h2v2h-2z" />
      </svg>
    </button>
    <button className="flex h-full w-[54px] items-center justify-center" aria-label="Microsoft Edge">
      <svg viewBox="0 0 48 48" className="h-6 w-6" aria-hidden="true">
        <EdgeShape id="bar-edge" />
      </svg>
    </button>
    <button className="flex h-full w-[44px] items-center justify-center border-b-2 border-[#76b9ed] pt-0.5" aria-label="File Explorer">
      <TaskbarFolder />
    </button>
    <button className="flex h-full w-[52px] items-center justify-center" aria-label="Firefox">
      <svg viewBox="0 0 48 48" className="h-6 w-6" aria-hidden="true">
        <FirefoxShape id="bar-firefox" />
      </svg>
    </button>
    <button className="flex h-full w-12 items-center justify-center border-b-2 border-[#76b9ed] bg-[#37464f] pt-0.5" aria-label="SecHex-Spoofy">
      <TaskbarMonitor />
    </button>
    <div className="ml-auto flex h-full items-center">
      <button className="flex w-6 justify-center" aria-label="Show hidden icons">
        <Chevron className="h-[7px] w-3" d="m1 5 4-4 4 4" />
      </button>
      <button className="flex w-6 justify-center" aria-label="Meet now">
        <svg viewBox="0 0 16 16" className="h-4 w-4" fill="none" stroke="#fff" strokeWidth="1.200" aria-hidden="true">
          <rect x="2.500" y="5" width="7.500" height="6.500" rx="1.500" />
          <path d="m10 7.500 3-1.500v5l-3-1.500M4 2.500C6 .5 9 .5 11 2.500M4 14c2 2 5 2 7 0" />
        </svg>
      </button>
      <button className="flex w-6 justify-center" aria-label="Network status">
        <svg viewBox="0 0 16 16" className="h-4 w-4" fill="none" stroke="#fff" strokeWidth="1.200" aria-hidden="true">
          <path d="M5 3.500h10.500v7H4.500V6M10 10.500v3.500M6 14.500h8M.5 2.500h4v3h-4zM2.500 5.500v9" />
        </svg>
      </button>
      <button className="flex w-6 justify-center" aria-label="Volume">
        <svg viewBox="0 0 17 16" className="h-4 w-[17px]" fill="none" stroke="#fff" strokeWidth="1.200" aria-hidden="true">
          <path d="M.5 5.500h3L7 2v12l-3.500-3.500h-3zM9.500 6c1 1 1 3 0 4M11.500 4c2.500 2 2.500 6 0 8M13.500 2c3.500 3 3.500 9 0 12" />
        </svg>
      </button>
      <button className="w-[62px] text-center text-[12px] leading-[18px] whitespace-nowrap">
        <time>
          11:19 AM
          <br />
          1/5/2025
        </time>
      </button>
      <button className="flex w-11 justify-center" aria-label="Notifications">
        <svg viewBox="0 0 16 16" className="h-4 w-4" fill="none" stroke="#fff" strokeWidth="1.200" aria-hidden="true">
          <path d="M.6 1h14.800v11.500H10.500L8 15l-2.500-2.500H.6z" />
        </svg>
      </button>
      <span className="mr-1 ml-1.5 h-full w-px bg-[#4a5560]" />
    </div>
  </footer>
);

export default function App() {
  return (
    <div className="relative flex h-screen flex-col overflow-hidden bg-[linear-gradient(100deg,#00a2fa_0%,#00b2ff_22%,#0092ee_42%,#006be2_60%,#0050d8_80%,#0036ac_100%)] font-['Open_Sans','Noto_Sans',sans-serif]">
      <main className="min-h-0 flex-1">
        <DesktopIcons />
        <ExplorerWindow />
        <SpoofyWindow />
      </main>
      <Taskbar />
      <Watermark />
    </div>
  );
}
